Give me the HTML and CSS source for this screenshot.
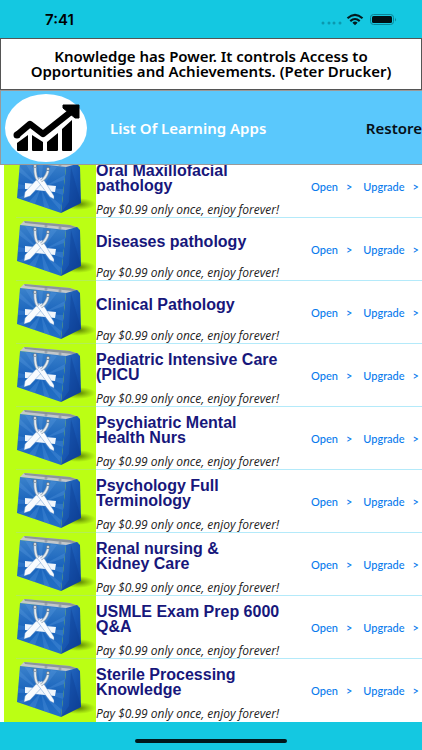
FILE: index.html
```html
<!DOCTYPE html>
<html lang="en">
<head>
<meta charset="utf-8">
<meta name="viewport" content="width=device-width, initial-scale=1">
<title>List Of Learning Apps</title>
<link rel="stylesheet" href="styles.css">
</head>
<body>
<svg class="defs" aria-hidden="true">
  <defs>
    <linearGradient id="front" x1="0" y1="0" x2="0" y2="1"><stop offset="0" stop-color="#3b82cb"/><stop offset=".5" stop-color="#1a64bc"/><stop offset="1" stop-color="#2370c6"/></linearGradient>
    <linearGradient id="side" x1="0" y1="0" x2="1" y2="1"><stop offset="0" stop-color="#2b6fc0"/><stop offset=".5" stop-color="#1857b2"/><stop offset="1" stop-color="#0d3f96"/></linearGradient>
    <radialGradient id="shade"><stop offset="0" stop-color="#3c5a00" stop-opacity=".8"/><stop offset="1" stop-color="#5c8000" stop-opacity="0"/></radialGradient>
  </defs>
  <symbol id="bag" viewBox="0 0 92 63">
    <ellipse cx="74" cy="49" rx="18" ry="6" fill="url(#shade)"/>
    <path d="M16 7 20 3 66 7 75 10 63 13z" fill="#c3c8cb"/>
    <path d="M20 3 66 7 75 10 69 10 21 5z" fill="#8b959c"/>
    <path d="M16 7 62 12 57 58 13 43z" fill="url(#front)"/>
    <g fill="#62a5e6" opacity=".25">
      <path d="M37 33 15 17 16 12zM37 33 21 8 27 9zM37 33 34 10 39 10zM37 33 47 11 53 12zM37 33 61 20 60 25zM37 33 59 34 59 40zM37 33 57 50 56 55zM37 33 46 54 40 52zM37 33 31 49 25 47zM37 33 19 44 14 43zM37 33 14 34 14 29z"/>
    </g>
    <path d="M62 12 73 9 76 12 77 48 57 58z" fill="url(#side)"/>
    <path d="M67 12 65 47 57 58 77 48" fill="#0b398d" opacity=".35"/>
    <path d="M21 28 52 31 51 37 21 34z" fill="#f0f6fc"/>
    <path d="M35 22 40 26 26 41 20 43 21 37z" fill="#f8fbfe" stroke="#4f87c5" stroke-width=".4"/>
    <path d="M33 25 38 22 50 41 50 44 46 42z" fill="#f8fbfe" stroke="#4f87c5" stroke-width=".4"/>
    <path d="M31 12Q31 22 34 25M44 16Q42 23 37 26" fill="none" stroke="#96a6b5" stroke-width="3"/>
    <path d="M31 12Q31 22 34 25M44 16Q42 23 37 26" fill="none" stroke="#e5ecf2" stroke-width="1.600"/>
    <g fill="#edf1f4" stroke="#66737f" stroke-width=".7"><circle cx="31" cy="11" r="1.500"/><circle cx="44" cy="14" r="1.500"/><circle cx="42" cy="8" r="1"/><circle cx="56" cy="10" r="1"/></g>
  </symbol>
</svg>
<div class="status">
  <time>7:41</time>
  <svg class="signals" viewBox="0 0 78 16" aria-hidden="true">
    <g fill="#0b98ae"><circle cx="3" cy="11" r="1.5"/><circle cx="9" cy="11" r="1.5"/><circle cx="14" cy="11" r="1.5"/><circle cx="20" cy="11" r="1.5"/></g>
    <g fill="none" stroke="#041a1e" stroke-width="2.1"><path d="M27.500 6.200Q35 -.6 42.500 6.200M30.300 9.100Q35 4.900 39.700 9.100"/></g>
    <path d="M32.400 10.700Q35 8.500 37.600 10.700L35 13.200z" fill="#041a1e"/>
    <rect x="50.500" y="2.500" width="23" height="10" rx="3" fill="none" stroke="#0b8497"/>
    <rect x="52" y="4" width="20" height="7" rx="1.500" fill="#001014"/>
    <path d="M75 5.500Q76.800 7.500 75 9.500z" fill="#0b8497"/>
  </svg>
</div>
<p class="quote">Knowledge has Power. It controls Access to Opportunities and Achievements. (Peter Drucker)</p>
<header class="bar">
  <svg class="logo" viewBox="0 0 82 68" role="img" aria-label="Growth chart">
    <ellipse cx="41" cy="34" rx="41" ry="34" fill="#fff"/>
    <path d="M12 41 25 30 38 40 67 17" fill="none" stroke="#000" stroke-width="6.500" stroke-linejoin="round"/>
    <circle cx="12" cy="41" r="3.500"/>
    <path d="M58 11 74 11 74 24 70 24 58 14z" stroke="#000" stroke-linejoin="round"/>
    <path d="M12 49 23 41V56Q23 57 22 57H13Q12 57 12 56zM27 41 38 48V56Q38 57 37 57H28Q27 57 27 56zM42 48 53 39V56Q53 57 52 57H43Q42 57 42 56zM57 35 67 26V56Q67 57 66 57H58Q57 57 57 56z"/>
  </svg>
  <h1>List Of Learning Apps</h1>
  <button class="restore" type="button">Restore</button>
</header>
<main class="list">
  <article class="row"><svg class="bag" aria-hidden="true"><use href="#bag"/></svg><div class="info"><h2>Oral Maxillofacial pathology</h2><p>Pay $0.99 only once, enjoy forever!</p></div><a href="#">Open<span>&gt;</span></a><a href="#">Upgrade<span>&gt;</span></a></article>
  <article class="row"><svg class="bag" aria-hidden="true"><use href="#bag"/></svg><div class="info"><h2>Diseases pathology</h2><p>Pay $0.99 only once, enjoy forever!</p></div><a href="#">Open<span>&gt;</span></a><a href="#">Upgrade<span>&gt;</span></a></article>
  <article class="row"><svg class="bag" aria-hidden="true"><use href="#bag"/></svg><div class="info"><h2>Clinical Pathology</h2><p>Pay $0.99 only once, enjoy forever!</p></div><a href="#">Open<span>&gt;</span></a><a href="#">Upgrade<span>&gt;</span></a></article>
  <article class="row"><svg class="bag" aria-hidden="true"><use href="#bag"/></svg><div class="info"><h2>Pediatric Intensive Care (PICU</h2><p>Pay $0.99 only once, enjoy forever!</p></div><a href="#">Open<span>&gt;</span></a><a href="#">Upgrade<span>&gt;</span></a></article>
  <article class="row"><svg class="bag" aria-hidden="true"><use href="#bag"/></svg><div class="info"><h2>Psychiatric Mental Health Nurs</h2><p>Pay $0.99 only once, enjoy forever!</p></div><a href="#">Open<span>&gt;</span></a><a href="#">Upgrade<span>&gt;</span></a></article>
  <article class="row"><svg class="bag" aria-hidden="true"><use href="#bag"/></svg><div class="info"><h2>Psychology Full Terminology</h2><p>Pay $0.99 only once, enjoy forever!</p></div><a href="#">Open<span>&gt;</span></a><a href="#">Upgrade<span>&gt;</span></a></article>
  <article class="row"><svg class="bag" aria-hidden="true"><use href="#bag"/></svg><div class="info"><h2>Renal nursing &amp;<br>Kidney Care</h2><p>Pay $0.99 only once, enjoy forever!</p></div><a href="#">Open<span>&gt;</span></a><a href="#">Upgrade<span>&gt;</span></a></article>
  <article class="row"><svg class="bag" aria-hidden="true"><use href="#bag"/></svg><div class="info"><h2>USMLE Exam Prep 6000 Q&amp;A</h2><p>Pay $0.99 only once, enjoy forever!</p></div><a href="#">Open<span>&gt;</span></a><a href="#">Upgrade<span>&gt;</span></a></article>
  <article class="row"><svg class="bag" aria-hidden="true"><use href="#bag"/></svg><div class="info"><h2>Sterile Processing Knowledge</h2><p>Pay $0.99 only once, enjoy forever!</p></div><a href="#">Open<span>&gt;</span></a><a href="#">Upgrade<span>&gt;</span></a></article>
</main>
<footer class="home"><div class="indicator"></div></footer>
</body>
</html>
```
FILE: styles.css
```css
* { box-sizing: border-box; }
body {
  margin: 0;
  height: 100vh;
  display: flex;
  flex-direction: column;
  overflow: hidden;
  background: #14c8e1;
  font-family: "Noto Sans", sans-serif;
  color: #000;
}
h1, h2, p { margin: 0; }
.defs { position: absolute; width: 0; height: 0; }
.status {
  flex: none;
  height: 38px;
  padding: 2px 24px 0 45px;
  display: flex;
  align-items: center;
  justify-content: space-between;
}
.status time { font: 600 15px/20px Inter, sans-serif; }
.signals { width: 78px; height: 16px; }
.quote {
  flex: none;
  padding: 10px 20px;
  border: 1px solid #555;
  background: #fff;
  font-size: 15px;
  font-weight: 600;
  line-height: 15px;
  text-align: center;
}
.bar {
  flex: none;
  height: 75px;
  padding-left: 4px;
  display: flex;
  align-items: center;
  border: 1px solid #999;
  border-right: 0;
  background: #5ac8fc;
}
.logo { flex: none; width: 82px; height: 68px; }
.bar h1 {
  flex: 1;
  margin-left: 23px;
  font-size: 15px;
  font-weight: 600;
  line-height: 20px;
  color: #fff;
}
.restore {
  padding: 0;
  border: 0;
  background: none;
  font: 600 15px/20px "Noto Sans", sans-serif;
  color: #061018;
}
.list {
  flex: 1;
  min-height: 0;
  display: flex;
  flex-direction: column;
  justify-content: flex-end;
  overflow: hidden;
  background: #fff;
}
.row {
  flex: none;
  height: 63px;
  margin-left: 4px;
  padding-right: 3px;
  display: flex;
  background: linear-gradient(#b4eafa, #b4eafa) 12px 100% / 100% 1px no-repeat;
}
.row:last-child { background: none; }
.bag {
  flex: none;
  width: 92px;
  height: 63px;
  background: linear-gradient(#b3ef55, #b3ef55) 12px 100% / 100% 1px no-repeat #bbff14;
}
.row:last-child .bag { background: #bbff14; }
.info { flex: 1; min-width: 0; }
.info h2 {
  width: 190px;
  height: 46px;
  margin-bottom: 2px;
  display: flex;
  align-items: center;
  font: 700 16px/15px "Liberation Sans", sans-serif;
  color: #17177b;
}
.info p {
  font: italic 12px/14px "Open Sans", sans-serif;
  color: #222;
  white-space: nowrap;
}
.row a {
  margin-left: 11px;
  padding-top: 24px;
  display: flex;
  gap: 8px;
  font: 500 11px/16px "Lato", sans-serif;
  color: #087bed;
  text-decoration: none;
}
.home {
  flex: none;
  height: 28px;
  display: flex;
  justify-content: center;
  align-items: center;
  padding-top: 10px;
}
.indicator { width: 36%; height: 4px; border-radius: 2px; background: #00181b; }
```
